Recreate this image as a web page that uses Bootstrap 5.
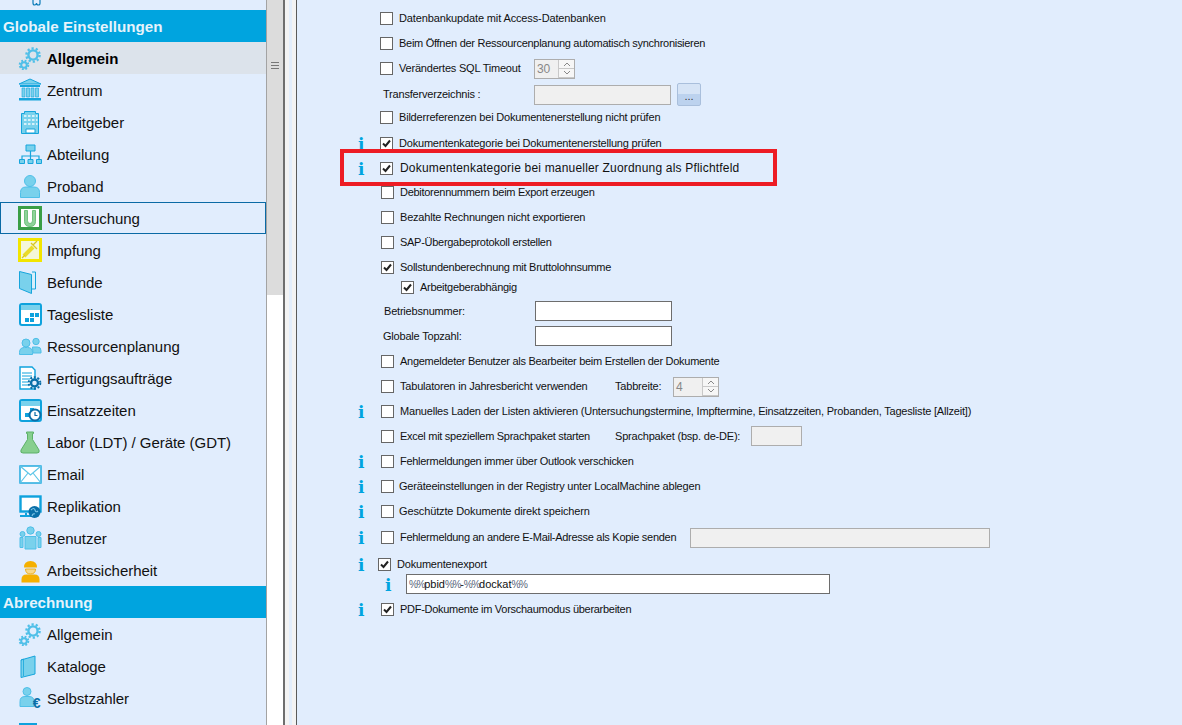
<!DOCTYPE html>
<html lang="de">
<head>
<meta charset="utf-8">
<title>Globale Einstellungen</title>
<link href="https://cdn.jsdelivr.net/npm/bootstrap@5.3.0/dist/css/bootstrap.min.css" rel="stylesheet">
<style>
html,body{height:100%;overflow:hidden;background:#e1edfd;}
body{font-family:"Liberation Sans",Arial,sans-serif;color:#111;}
.app-shell{height:725px;width:1182px;overflow:hidden;}
.side-nav{width:267px;flex:none;background:#e1edfd;border-right:1px solid #a3a3a3;overflow:hidden;height:725px;}
.side-nav>*{flex:none;}
.side-top{height:10px;overflow:hidden;padding-left:32px;}
.side-top svg{display:block;}
.nav-head{height:32px;line-height:33px;background:#00a4df;color:#e6f3fb;font-weight:700;font-size:15.2px;padding-left:3px;white-space:nowrap;}
.nav-entry.list-group-item{height:32px;flex:none;background:transparent;border:1px solid transparent;border-radius:0;padding:2px 0 0 17px;margin:0;color:#111;font-size:15px;letter-spacing:-.04px;gap:5px;white-space:nowrap;}
.nav-entry.active-entry{background:#dce3eb;font-weight:700;color:#000;border-color:#dce3eb;}
.nav-entry.focus-entry{border-color:#0a6aa5;}
.nav-entry svg{flex:none;width:24px;height:24px;margin-bottom:2px;overflow:visible;}
.bar-track{width:16px;flex:none;background:#fff;height:725px;}
.bar-thumb{height:295px;background:#dcdcdc;}
.bar-grip{width:8px;height:7px;margin-left:4px;position:relative;top:62px;background:linear-gradient(#777 0 1px,#dcdcdc 1px 3px,#777 3px 4px,#dcdcdc 4px 6px,#777 6px 7px);}
.split-bar{width:14px;flex:none;height:725px;border-left:2px solid #6e6e6e;border-right:1px solid #5a5a5a;background:linear-gradient(90deg,#f3f3f3 0 4px,#e3eefc 4px 7px,#f3f3f3 7px);}
.form-pane{flex:1;background:#e1edfd;position:relative;padding:8px 0 0 61px;font-size:11px;letter-spacing:-.2px;height:725px;}
.opt-row{height:25px;line-height:20px;white-space:nowrap;}
.p20{height:20px}.p23{height:23px}.p24{height:24px}.p26{height:26px}.p27{height:27px}
.info-slot{width:22px;flex:none;color:#00a4df;font-family:"DejaVu Serif",serif;font-weight:700;font-size:17px;letter-spacing:0;line-height:22px;}
.info-slot.info-in{padding-left:27px;width:48px;}
.opt-row .form-check-input{width:13px;height:13px;flex:none;margin:4px 6px 0 0;border:1px solid #666;border-radius:0;background-color:#fff;box-shadow:none;float:none;}
.opt-row .form-check-input:checked{background-color:#fff;border-color:#666;background-size:11px;background-image:url("data:image/svg+xml,%3csvg xmlns='http://www.w3.org/2000/svg' viewBox='0 0 11 11'%3e%3cpath fill='none' stroke='%23222' stroke-width='2' d='M2 5.500l2.500 2.500L9 2.500'/%3e%3c/svg%3e");}
.opt-row .form-check-input.shift1{margin-left:1px}
.opt-row .form-check-input.shift-n2{margin-left:-2px}
.opt-row .form-check-input.tight{margin-right:5px}
.opt-label{margin:0;}
.snug{letter-spacing:-.28px;}
.loose{letter-spacing:-.13px;}
.wide-label{font-size:12px;letter-spacing:.19px;margin-left:1px;}
.win-field.form-control{height:20px;border:1px solid #adadad;background:#f0f0f0;border-radius:0;padding:0 2px;font-size:11px;line-height:18px;color:#888;min-height:0;letter-spacing:inherit;}
.win-field.live.form-control{background:#fff;border-color:#6d6d6d;color:#111;}
.win-field.pattern-field.form-control{letter-spacing:0;}
.pct-sign{font-size:10px;letter-spacing:-1.3px;color:#56657a;}
.w137.form-control{width:137px}.w51.form-control{width:51px}.w300.form-control{width:300px}.w424.form-control{width:424px}.w41{width:41px}.w46{width:46px}
.to-534{width:135px;}
.to-615{width:215px;}
.to-690{width:290px;}
.to-673{width:58px;}
.to-751{width:136px;}
.spin-box{border:1px solid #adadad;background:#f0f0f0;height:20px;color:#888;padding-left:2px;line-height:18px;position:relative;font-size:12px;}
.spin-arrows{position:absolute;right:0;top:0;bottom:0;width:16px;background:#f6f6f6;border-left:1px solid #c8c8c8;}
.spin-arrows span{flex:1;border-bottom:1px solid #c8c8c8;}
.spin-arrows svg{display:block;margin:1px auto;}
.dots-btn.btn{width:24px;height:23px;margin:-1px 0 0 6px;padding:0;border:1px solid #a9bfdc;border-radius:2px;background:linear-gradient(#d6e4f6 50%,#bcd2ee 50%);font-size:11px;color:#333;line-height:24px;}
.lab-t{width:154px;padding-left:3px;}
.lab-b{width:155px;padding-left:4px;}
.lab-c{width:155px;padding-left:3px;}
.nudge1{margin-top:1px;}
.mark-frame{position:absolute;left:43px;top:149px;width:437px;height:37px;border:4px solid #ed1c24;pointer-events:none;}
.ind-row{padding-left:23px;}
</style>
</head>
<body>
<svg width="0" height="0" style="position:absolute">
<defs>
<symbol id="gears" viewBox="0 0 24 24">
<g fill="none" stroke="#4fbfe8"><circle cx="15" cy="9" r="4.6" stroke-width="2.4"/><circle cx="15" cy="9" r="6.6" stroke-width="2.4" stroke-dasharray="2.2 2"/><circle cx="6" cy="19" r="2.8" stroke-width="2"/><circle cx="6" cy="19" r="4.3" stroke-width="2" stroke-dasharray="1.8 1.6"/></g>
</symbol>
</defs>
</svg>
<div class="app-shell d-flex">
<nav class="side-nav d-flex flex-column">
<div class="side-top"><svg width="10" height="6" viewBox="0 0 10 6"><path d="M1 0v3q0 2 1.700 2t1.800-2q0 2 1.800 2t1.700-2V0" fill="none" stroke="#0a7bb8" stroke-width="1.200"/></svg></div>
<div class="nav-head">Globale Einstellungen</div>
<div class="list-group list-group-flush">
<a class="list-group-item nav-entry active-entry d-flex align-items-center"><svg><use href="#gears"/></svg>Allgemein</a>
<a class="list-group-item nav-entry d-flex align-items-center"><svg viewBox="0 0 24 24"><path d="M12 1L1 6h22z" fill="#79d1ec" stroke="#16a5dc"/><path d="M2 7h20v2H2zM1 20h22v2.500H1z" fill="#16a5dc"/><path d="M4 10h3v9H4zM8.500 10h3v9h-3zM13 10h3v9h-3zM17.500 10h3v9h-3z" fill="#79d1ec" stroke="#16a5dc" stroke-width=".6"/></svg>Zentrum</a>
<a class="list-group-item nav-entry d-flex align-items-center"><svg viewBox="0 0 24 24"><path d="M3.500 3.500h3v-2h11v2h3v20h-17z" fill="#79d1ec" stroke="#16a5dc"/><path d="M6 5h2.500v2H6zM10 5h2.500v2H10zM14 5h2.500v2H14zM18 5h1.500v2H18zM6 9h2.500v2H6zM10 9h2.500v2H10zM14 9h2.500v2H14zM18 9h1.500v2H18zM6 13h2.500v2H6zM10 13h2.500v2H10zM14 13h2.500v2H14zM18 13h1.500v2H18z" fill="#d6f1fa"/><path d="M8 19h9v4H8z" fill="#fff" stroke="#16a5dc"/></svg>Arbeitgeber</a>
<a class="list-group-item nav-entry d-flex align-items-center"><svg viewBox="0 0 24 24"><path d="M12.500 9v8M4 17v-3h17v3" fill="none" stroke="#16a5dc" stroke-width="1.200"/><path d="M8 3h9v6H8zM1.500 17.500h5v4h-5zM10 17.500h5v4h-5zM18.500 17.500h5v4h-5z" fill="#79d1ec" stroke="#16a5dc"/></svg>Abteilung</a>
<a class="list-group-item nav-entry d-flex align-items-center"><svg viewBox="0 0 24 24"><circle cx="12" cy="7" r="5.500" fill="#79d1ec" stroke="#4fbfe8"/><path d="M2.500 23.500v-5q0-5.500 5.500-5.500h8q5.500 0 5.500 5.500v5z" fill="#79d1ec" stroke="#4fbfe8"/></svg>Proband</a>
<a class="list-group-item nav-entry focus-entry d-flex align-items-center"><svg viewBox="0 0 24 24"><rect x="1.500" y="1.500" width="21" height="21" fill="#fff" stroke="#3a9e46" stroke-width="3"/><path d="M6.500 4.500h3v10q0 3 2.500 3t2.500-3v-10h3v11q0 5-5.500 5t-5.500-5z" fill="#8fd39a" stroke="#5ab868" stroke-width=".8"/></svg>Untersuchung</a>
<a class="list-group-item nav-entry d-flex align-items-center"><svg viewBox="0 0 24 24"><rect x="1.500" y="1.500" width="21" height="21" fill="#f4f7d8" stroke="#f2e500" stroke-width="3"/><path d="M6 18l9-9" fill="none" stroke="#eadb28" stroke-width="4"/><path d="M4 20l3-3M15 7l4-4M13 5l6 6" fill="none" stroke="#d9c820" stroke-width="1.300"/></svg>Impfung</a>
<a class="list-group-item nav-entry d-flex align-items-center"><svg viewBox="0 0 24 24"><path d="M14 2h3.500v17H14" fill="#d8eefa" stroke="#16a5dc"/><path d="M1.500 1.500l12 3v19l-12-5z" fill="#79d1ec" stroke="#16a5dc"/></svg>Befunde</a>
<a class="list-group-item nav-entry d-flex align-items-center"><svg viewBox="0 0 24 24"><rect x="2" y="2" width="21" height="21" rx="2" fill="#fff" stroke="#0ea2dd" stroke-width="2"/><path d="M3 3h19v5H3z" fill="#79d1ec"/><path d="M12 11h4v4h-4zM17 11h4v4h-4zM7 16h4v4H7zM12 16h4v4h-4z" fill="#0ea2dd"/></svg>Tagesliste</a>
<a class="list-group-item nav-entry d-flex align-items-center"><svg viewBox="0 0 24 24"><circle cx="8" cy="9" r="4" fill="#79d1ec" stroke="#4fbfe8"/><circle cx="18" cy="7.500" r="3.200" fill="#79d1ec" stroke="#4fbfe8"/><path d="M14.500 13h5q3.500 0 3.500 3.500v2.500H15z" fill="#79d1ec" stroke="#4fbfe8"/><path d="M1.500 20.500v-2q0-5 5-5h3q5 0 5 5v2z" fill="#79d1ec" stroke="#4fbfe8"/></svg>Ressourcenplanung</a>
<a class="list-group-item nav-entry d-flex align-items-center"><svg viewBox="0 0 24 24"><path d="M2 1h12l3 3v19H2z" fill="#fff" stroke="#0ea2dd" stroke-width="1.400"/><path d="M4 7h10M4 10h10M4 13h8M4 16h6M4 19h6" stroke="#0ea2dd"/><circle cx="16.500" cy="17" r="3.500" fill="#e1edfd" stroke="#0a6fa8" stroke-width="2.400"/><circle cx="16.500" cy="17" r="5.800" fill="none" stroke="#0a6fa8" stroke-width="2" stroke-dasharray="2 1.700"/></svg>Fertigungsaufträge</a>
<a class="list-group-item nav-entry d-flex align-items-center"><svg viewBox="0 0 24 24"><rect x="2" y="2" width="21" height="21" rx="2" fill="#fff" stroke="#0ea2dd" stroke-width="2"/><path d="M3 3h19v5H3z" fill="#79d1ec"/><path d="M12 10h4v4h-4zM7 15h4v4H7z" fill="#0ea2dd"/><circle cx="17" cy="17" r="5.500" fill="#fff" stroke="#0a6fa8" stroke-width="2"/><path d="M17 14v3.500h2.500" fill="none" stroke="#0a6fa8" stroke-width="1.200"/></svg>Einsatzzeiten</a>
<a class="list-group-item nav-entry d-flex align-items-center"><svg viewBox="0 0 24 24"><path d="M8.500 2h7v1.500h-1v6L21 20q1 3-2 3H5q-3 0-2-3l6.500-10.500v-6h-1z" fill="#86cf8e" stroke="#5cb168"/></svg>Labor (LDT) / Geräte (GDT)</a>
<a class="list-group-item nav-entry d-flex align-items-center"><svg viewBox="0 0 24 24"><rect x="2" y="4" width="21" height="17" fill="#fff" stroke="#16a5dc" stroke-width="1.400"/><path d="M2 4l10.500 9L23 4M2 21l8-10M23 21l-8-10" fill="none" stroke="#5cc5e8" stroke-width="1.200"/></svg>Email</a>
<a class="list-group-item nav-entry d-flex align-items-center"><svg viewBox="0 0 24 24"><rect x="2.500" y="2.500" width="20" height="15" fill="#fff" stroke="#0ea2dd" stroke-width="2.400"/><path d="M2 22h14M8 19v3" stroke="#0ea2dd" stroke-width="2"/><circle cx="16.500" cy="18" r="6" fill="#0a6fa8"/><path d="M13 16q3-3 4 0t3 1M14 22q1-3 3-2" fill="none" stroke="#7fc6e8" stroke-width="1.100"/></svg>Replikation</a>
<a class="list-group-item nav-entry d-flex align-items-center"><svg viewBox="0 0 24 24"><circle cx="12.500" cy="4.500" r="3.700" fill="#79d1ec" stroke="#4fbfe8"/><circle cx="4.500" cy="8" r="2.500" fill="#79d1ec" stroke="#4fbfe8"/><circle cx="20.500" cy="8" r="2.500" fill="#79d1ec" stroke="#4fbfe8"/><path d="M2 11.500h3v10H2zM20 11.500h3v10h-3z" fill="#79d1ec" stroke="#4fbfe8"/><path d="M7 10.500h11v12.500H7z" fill="#79d1ec" stroke="#4fbfe8"/></svg>Benutzer</a>
<a class="list-group-item nav-entry d-flex align-items-center"><svg viewBox="0 0 24 24"><path d="M6 8.500q0-6.500 6.500-6.500t6.500 6.500z" fill="#f5b000"/><path d="M7.500 10h10q0 5-5 5t-5-5z" fill="#f9d98a" stroke="#e8a400" stroke-width=".8"/><path d="M3.500 23.500v-3q0-5 5-5h8q5 0 5 5v3z" fill="#f5b000"/></svg>Arbeitssicherheit</a>
</div>
<div class="nav-head">Abrechnung</div>
<div class="list-group list-group-flush">
<a class="list-group-item nav-entry d-flex align-items-center"><svg><use href="#gears"/></svg>Allgemein</a>
<a class="list-group-item nav-entry d-flex align-items-center"><svg viewBox="0 0 24 24"><path d="M3 6l14-4v18L3 23.500z" fill="#79d1ec" stroke="#16a5dc"/><path d="M3 6l2.500-1v17" fill="none" stroke="#16a5dc" stroke-width=".8"/></svg>Kataloge</a>
<a class="list-group-item nav-entry d-flex align-items-center"><svg viewBox="0 0 24 24"><circle cx="9" cy="5.500" r="4" fill="#79d1ec" stroke="#4fbfe8"/><path d="M2 20.500v-5q0-5 5-5h4q5 0 5 5v5z" fill="#79d1ec" stroke="#4fbfe8"/><text x="14.800" y="22" font-family="Liberation Sans" font-weight="700" font-size="14" fill="#0a6fa8">€</text></svg>Selbstzahler</a>
<a class="list-group-item nav-entry d-flex align-items-center"><svg viewBox="0 0 24 24"><rect x="2" y="5" width="16" height="18" fill="#fff" stroke="#0ea2dd" stroke-width="2"/><path d="M3 5h14v8H3z" fill="#0ea2dd"/></svg></a>
</div>
</nav>
<div class="bar-track"><div class="bar-thumb"><div class="bar-grip"></div></div></div>
<div class="split-bar"></div>
<main class="form-pane">
<div class="opt-row d-flex"><span class="info-slot"></span><input class="form-check-input" type="checkbox"><label class="opt-label loose">Datenbankupdate mit Access-Datenbanken</label></div>
<div class="opt-row d-flex"><span class="info-slot"></span><input class="form-check-input" type="checkbox"><label class="opt-label snug">Beim Öffnen der Ressourcenplanung automatisch synchronisieren</label></div>
<div class="opt-row p26 d-flex"><span class="info-slot"></span><input class="form-check-input" type="checkbox"><label class="opt-label to-534">Verändertes SQL Timeout</label><div class="spin-box w41 nudge1">30<div class="spin-arrows d-flex flex-column"><span><svg width="8" height="6" viewBox="0 0 8 6"><path d="M1 5l3-3 3 3" fill="none" stroke="#888"/></svg></span><span><svg width="8" height="6" viewBox="0 0 8 6"><path d="M1 1l3 3 3-3" fill="none" stroke="#888"/></svg></span></div></div></div>
<div class="opt-row p23 d-flex"><span class="info-slot"></span><span class="lab-t">Transferverzeichnis :</span><div class="win-field w137 form-control nudge1"></div><button class="btn dots-btn" type="button">...</button></div>
<div class="opt-row p26 d-flex"><span class="info-slot"></span><input class="form-check-input" type="checkbox"><label class="opt-label">Bilderreferenzen bei Dokumentenerstellung nicht prüfen</label></div>
<div class="opt-row d-flex"><span class="info-slot">i</span><input class="form-check-input" type="checkbox" checked><label class="opt-label">Dokumentenkategorie bei Dokumentenerstellung prüfen</label></div>
<div class="opt-row p24 d-flex"><span class="info-slot">i</span><input class="form-check-input" type="checkbox" checked><label class="opt-label wide-label">Dokumentenkategorie bei manueller Zuordnung als Pflichtfeld</label></div>
<div class="opt-row d-flex"><span class="info-slot"></span><input class="form-check-input shift1" type="checkbox"><label class="opt-label snug">Debitorennummern beim Export erzeugen</label></div>
<div class="opt-row d-flex"><span class="info-slot"></span><input class="form-check-input shift1" type="checkbox"><label class="opt-label">Bezahlte Rechnungen nicht exportieren</label></div>
<div class="opt-row d-flex"><span class="info-slot"></span><input class="form-check-input shift1" type="checkbox"><label class="opt-label snug">SAP-Übergabeprotokoll erstellen</label></div>
<div class="opt-row p20 d-flex"><span class="info-slot"></span><input class="form-check-input shift1" type="checkbox" checked><label class="opt-label snug">Sollstundenberechnung mit Bruttolohnsumme</label></div>
<div class="opt-row p24 d-flex"><span class="info-slot"></span><span class="ind-row d-flex"><input class="form-check-input shift-n2" type="checkbox" checked><label class="opt-label snug">Arbeitgeberabhängig</label></span></div>
<div class="opt-row d-flex"><span class="info-slot"></span><span class="lab-b">Betriebsnummer:</span><div class="win-field live w137 form-control"></div></div>
<div class="opt-row d-flex"><span class="info-slot"></span><span class="lab-c">Globale Topzahl:</span><div class="win-field live w137 form-control"></div></div>
<div class="opt-row d-flex"><span class="info-slot"></span><input class="form-check-input shift1" type="checkbox"><label class="opt-label snug">Angemeldeter Benutzer als Bearbeiter beim Erstellen der Dokumente</label></div>
<div class="opt-row d-flex"><span class="info-slot"></span><input class="form-check-input shift1" type="checkbox"><label class="opt-label to-615">Tabulatoren in Jahresbericht verwenden</label><span class="to-673">Tabbreite:</span><div class="spin-box w46 nudge1">4<div class="spin-arrows d-flex flex-column"><span><svg width="8" height="6" viewBox="0 0 8 6"><path d="M1 5l3-3 3 3" fill="none" stroke="#888"/></svg></span><span><svg width="8" height="6" viewBox="0 0 8 6"><path d="M1 1l3 3 3-3" fill="none" stroke="#888"/></svg></span></div></div></div>
<div class="opt-row d-flex"><span class="info-slot">i</span><input class="form-check-input shift1" type="checkbox"><label class="opt-label">Manuelles Laden der Listen aktivieren (Untersuchungstermine, Impftermine, Einsatzzeiten, Probanden, Tagesliste [Allzeit])</label></div>
<div class="opt-row d-flex"><span class="info-slot"></span><input class="form-check-input shift1" type="checkbox"><label class="opt-label to-615 snug">Excel mit speziellem Sprachpaket starten</label><span class="to-751">Sprachpaket (bsp. de-DE):</span><div class="win-field w51 form-control"></div></div>
<div class="opt-row d-flex"><span class="info-slot">i</span><input class="form-check-input shift1" type="checkbox"><label class="opt-label snug">Fehlermeldungen immer über Outlook verschicken</label></div>
<div class="opt-row d-flex"><span class="info-slot">i</span><input class="form-check-input shift1 tight" type="checkbox"><label class="opt-label">Geräteeinstellungen in der Registry unter LocalMachine ablegen</label></div>
<div class="opt-row p26 d-flex"><span class="info-slot">i</span><input class="form-check-input shift1 tight" type="checkbox"><label class="opt-label loose">Geschützte Dokumente direkt speichern</label></div>
<div class="opt-row p27 d-flex"><span class="info-slot">i</span><input class="form-check-input shift1" type="checkbox"><label class="opt-label to-690 snug">Fehlermeldung an andere E-Mail-Adresse als Kopie senden</label><div class="win-field w300 form-control nudge1"></div></div>
<div class="opt-row p20 d-flex"><span class="info-slot">i</span><input class="form-check-input shift-n2" type="checkbox" checked><label class="opt-label">Dokumentenexport</label></div>
<div class="opt-row d-flex"><span class="info-slot info-in">i</span><div class="win-field live pattern-field w424 form-control"><span class="pct-sign">%%</span>pbid<span class="pct-sign">%%</span>-<span class="pct-sign">%%</span>dockat<span class="pct-sign">%%</span></div></div>
<div class="opt-row d-flex"><span class="info-slot">i</span><input class="form-check-input shift1" type="checkbox" checked><label class="opt-label snug">PDF-Dokumente im Vorschaumodus überarbeiten</label></div>
<div class="mark-frame"></div>
</main>
</div>
<script src="https://cdn.jsdelivr.net/npm/bootstrap@5.3.0/dist/js/bootstrap.bundle.min.js"></script>
</body>
</html>
